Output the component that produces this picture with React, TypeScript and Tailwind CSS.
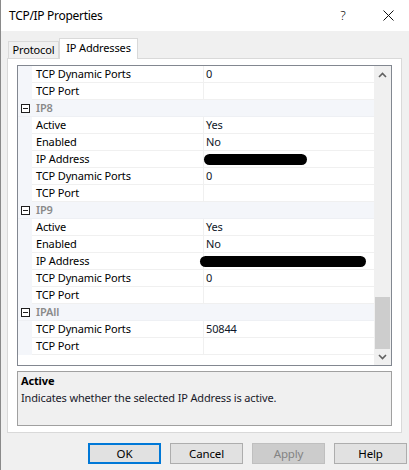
import React from "react";

type Row =
  | { t: "p"; n: string; v?: string; r?: number }
  | { t: "c"; n: string };

const rows: Row[] = [
  { t: "p", n: "TCP Dynamic Ports", v: "0" },
  { t: "p", n: "TCP Port" },
  { t: "c", n: "IP8" },
  { t: "p", n: "Active", v: "Yes" },
  { t: "p", n: "Enabled", v: "No" },
  { t: "p", n: "IP Address", r: 1 },
  { t: "p", n: "TCP Dynamic Ports", v: "0" },
  { t: "p", n: "TCP Port" },
  { t: "c", n: "IP9" },
  { t: "p", n: "Active", v: "Yes" },
  { t: "p", n: "Enabled", v: "No" },
  { t: "p", n: "IP Address", r: 2 },
  { t: "p", n: "TCP Dynamic Ports", v: "0" },
  { t: "p", n: "TCP Port" },
  { t: "c", n: "IPAll" },
  { t: "p", n: "TCP Dynamic Ports", v: "50844" },
  { t: "p", n: "TCP Port" },
];

function MinusBox() {
  return (
    <svg width="9" height="9" viewBox="0 0 9 9" className="block">
      <rect x="0.5" y="0.5" width="8" height="8" fill="#ffffff" stroke="#1e1e1e" />
      <line x1="2" y1="4.5" x2="7" y2="4.5" stroke="#1e1e1e" />
    </svg>
  );
}

function GridRow({ row }: { row: Row }) {
  if (row.t === "c") {
    return (
      <div className="flex h-[17px] bg-[#f4f6fa] border-b border-[#eef0f4]">
        <div className="w-[14px] flex items-center justify-center pl-[1px]">
          <MinusBox />
        </div>
        <div className="flex-1 flex items-center pl-[4px] font-semibold text-[#8a8a8a]">
          {row.n}
        </div>
      </div>
    );
  }
  return (
    <div className="flex h-[17px]">
      <div className="w-[14px] bg-[#f4f6fa]" />
      <div className="w-[171px] flex items-center pl-[4px] border-b border-[#f0f0f0] text-black">
        {row.n}
      </div>
      <div className="w-[1px] bg-[#f0f0f0]" />
      <div className="w-[170px] flex items-center pl-[2px] border-b border-[#f0f0f0] text-[#101828]">
        {row.r === 1 ? (
          <div className="-ml-[2px] w-[103px] h-[11px] rounded-full bg-black" />
        ) : row.r === 2 ? (
          <div className="-ml-[6px] w-[166px] h-[11px] rounded-full bg-black" />
        ) : (
          row.v
        )}
      </div>
    </div>
  );
}

function Chevron({ up }: { up?: boolean }) {
  return (
    <svg width="9" height="6" viewBox="0 0 9 6" className="block">
      <polyline
        points={up ? "1,5 4.5,1.5 8,5" : "1,1 4.5,4.5 8,1"}
        fill="none"
        stroke="#606060"
        strokeWidth="1.6"
      />
    </svg>
  );
}

function Btn({ label, primary, disabled }: { label: string; primary?: boolean; disabled?: boolean }) {
  const cls = primary
    ? "border-2 border-[#0078d7] bg-[#e1e1e1] text-black"
    : disabled
    ? "border border-[#bfbfbf] bg-[#cccccc] text-[#838383]"
    : "border border-[#adadad] bg-[#e1e1e1] text-black";
  return (
    <div className={`w-[73px] h-[21px] flex items-center justify-center ${cls}`}>{label}</div>
  );
}

export default function App() {
  return (
    <div
      className="w-[409px] h-[470px] bg-[#f0f0f0] flex flex-col border-l border-[#8a8a8a] overflow-hidden text-[11px] tracking-[-0.15px] text-black"
      style={{ fontFamily: '"Noto Sans", "Liberation Sans", sans-serif' }}
    >
      {/* title bar */}
      <div className="h-[31px] bg-white flex items-center pl-[8px] shrink-0">
        <div className="text-[12px] tracking-[-0.3px] text-black">TCP/IP Properties</div>
        <div className="flex-1" />
        <div className="w-[20px] text-center text-[13px] font-light mr-[30px]">?</div>
        <svg width="11" height="11" viewBox="0 0 11 11" className="mr-[15px]">
          <line x1="0.5" y1="0.5" x2="10.5" y2="10.5" stroke="#111" strokeWidth="1" />
          <line x1="10.5" y1="0.5" x2="0.5" y2="10.5" stroke="#111" strokeWidth="1" />
        </svg>
      </div>

      {/* tabs */}
      <div className="pl-[6px] pt-[6px] flex items-end h-[27px] shrink-0">
        <div className="h-[17px] w-[51px] ml-[1px] border border-b-0 border-[#d9d9d9] bg-[#f0f0f0] flex items-center justify-center">
          Protocol
        </div>
        <div className="relative z-10 h-[21px] w-[79px] -mb-[1px] border border-b-0 border-[#d9d9d9] bg-white flex items-center justify-center pb-[2px]">
          IP Addresses
        </div>
      </div>

      {/* panel */}
      <div className="ml-[6px] w-[395px] h-[375px] border border-[#d9d9d9] bg-white px-[9px] pt-[6px] flex flex-col shrink-0">
        {/* property grid */}
        <div className="w-[375px] h-[301px] border border-[#828790] flex bg-white">
          <div className="w-[356px] flex flex-col">
            {rows.map((r, i) => (
              <GridRow key={i} row={r} />
            ))}
          </div>
          <div className="w-[17px] bg-[#f0f0f0] flex flex-col">
            <div className="h-[17px] flex items-center justify-center">
              <Chevron up />
            </div>
            <div className="flex-1" />
            <div className="h-[52px] mx-[1px] bg-[#cdcdcd]" />
            <div className="h-[16px] flex items-center justify-center">
              <Chevron />
            </div>
          </div>
        </div>

        {/* description */}
        <div className="mt-[5px] w-[375px] h-[55px] border border-[#a0a0a0] bg-[#f0f0f0] px-[3px] pt-[1px]">
          <div className="font-bold text-black leading-[16px]">Active</div>
          <div className="text-[#1a1a2a] leading-[16px] mt-[1px]">
            Indicates whether the selected IP Address is active.
          </div>
        </div>
      </div>

      {/* buttons */}
      <div className="flex pl-[87px] pt-[10px] gap-[9px] text-[11.5px]">
        <Btn label="OK" primary />
        <Btn label="Cancel" />
        <Btn label="Apply" disabled />
        <Btn label="Help" />
      </div>
    </div>
  );
}
